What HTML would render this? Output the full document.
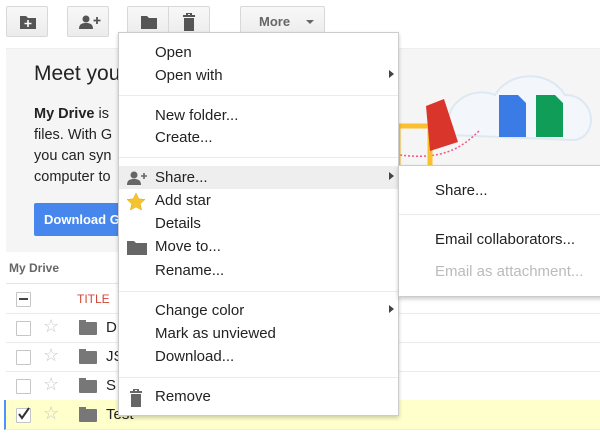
<!DOCTYPE html>
<html><head><style>
body{margin:0;width:600px;height:433px;overflow:hidden;background:#fff;font-family:"Liberation Sans",Arial,sans-serif;position:relative}
.a{position:absolute}
.btn{position:absolute;top:6px;height:31px;border:1px solid #d8d8d8;border-radius:2px;background:linear-gradient(#f8f8f8,#ececec);box-sizing:border-box}
.mi{position:absolute;left:36px;font-size:15px;color:#222;white-space:nowrap}
.sep{position:absolute;left:0;right:0;height:1px;background:#ebebeb}
.row{position:absolute;left:6px;width:594px;height:29px;border-bottom:1px solid #ebebeb}
.cb{position:absolute;left:10px;top:8px;width:13px;height:13px;border:1px solid #c6c6c6;background:#fff;border-radius:1px}
.star{position:absolute;left:37px;top:3px;font-size:18px;color:#c8c8c8}
.fold{position:absolute;left:73px;top:9px;width:18px;height:13px;background:#777;border-radius:1px}
.fold:before{content:"";position:absolute;left:0;top:-2px;width:7px;height:3px;background:#777}
.nm{position:absolute;left:100px;top:6px;font-size:15px;color:#222}
</style></head><body>
<div class="btn" style="left:6px;width:42px"><svg class="a" style="left:13px;top:8px" width="16" height="14"><path d="M0 1h6l2 2h8v11H0z" fill="#555"/><path d="M8 5v7M4.5 8.5h7" stroke="#fff" stroke-width="1.6"/></svg></div>
<div class="btn" style="left:67px;width:42px"><svg class="a" style="left:11px;top:8px" width="22" height="14"><circle cx="7" cy="4" r="3.5" fill="#555"/><path d="M0 14c0-5 3-6 7-6s7 1 7 6z" fill="#555"/><path d="M18 2v7M14.5 5.5h7" stroke="#555" stroke-width="1.8"/></svg></div>
<div class="btn" style="left:127px;width:42px;border-radius:2px 0 0 2px"><svg class="a" style="left:13px;top:8px" width="16" height="14"><path d="M0 1h6l2 2h8v11H0z" fill="#555"/></svg></div>
<div class="btn" style="left:168px;width:42px;border-radius:0 2px 2px 0"><svg class="a" style="left:14px;top:6px" width="12" height="18"><path d="M0 3h12M4 2V0h4v2" stroke="#555" stroke-width="2" fill="none"/><path d="M1 5h10v13H1z" fill="#555"/></svg></div>
<div class="btn" style="left:240px;width:85px"><span class="a" style="left:18px;top:7px;font-size:13px;font-weight:bold;color:#666">More</span><span class="a" style="left:65px;top:13px;border:4px solid transparent;border-top:4px solid #666"></span></div>

<div class="a" style="left:6px;top:48px;width:594px;height:203px;background:#f5f5f5;border-top:1px solid #eee"></div>
<div class="a" style="left:34px;top:62px;font-size:21px;color:#222">Meet you</div>
<div class="a" style="left:34px;top:104px;font-size:14.5px;color:#222;line-height:21px">
<b>My Drive</b> is<br>files. With G<br>you can syn<br>computer to</div>
<div class="a" style="left:34px;top:203px;width:90px;height:33px;background:#4787ed;border-radius:2px;color:#fff;font-size:13px;font-weight:bold"><span class="a" style="left:10px;top:9px">Download G</span></div>
<svg class="a" style="left:380px;top:60px" width="220" height="120">
<path d="M70 75c-10-30 20-50 45-40 15-25 55-25 70 0 30 0 35 40 10 45z" fill="#f3f7fb" stroke="#dde8f2" stroke-width="2"/>
<path d="M20 95c40 5 60-5 80-25" stroke="#e58" stroke-width="1.5" stroke-dasharray="2 2" fill="none"/>
<path d="M18 66h32v62H18z" fill="none" stroke="#fbc02d" stroke-width="5"/>
<path d="M46 46l18-7 14 43-28 9z" fill="#d9352b"/>
<path d="M119 35h19l8 8v34h-27z" fill="#3a7be6"/>
<path d="M156 35h19l8 8v34h-27z" fill="#0f9d58"/>
</svg>

<div class="a" style="left:9px;top:261px;font-size:12px;font-weight:bold;color:#666">My Drive</div>
<div class="a" style="left:6px;top:283px;width:594px;height:1px;background:#e5e5e5"></div>
<div class="row" style="top:284px"><div class="cb" style="top:8px"><div class="a" style="left:2px;top:5px;width:9px;height:2px;background:#444"></div></div><span class="a" style="left:71px;top:8px;font-size:12px;color:#d14836">TITLE</span></div>
<div class="row" style="top:313px"><div class="cb"></div><span class="star">☆</span><div class="fold"></div><span class="nm">D</span></div>
<div class="row" style="top:342px"><div class="cb"></div><span class="star">☆</span><div class="fold"></div><span class="nm">JS</span></div>
<div class="row" style="top:371px"><div class="cb"></div><span class="star">☆</span><div class="fold"></div><span class="nm">S</span></div>
<div class="row" style="top:400px;background:#ffffcc;border-left:2px solid #4d90fe;left:4px"><div class="cb"><svg class="a" style="left:0;top:-2px" width="14" height="14"><path d="M2 7l3 4 7-10" stroke="#333" stroke-width="2" fill="none"/></svg></div><span class="star">☆</span><div class="fold"></div><span class="nm">Test</span></div>

<div class="a" style="left:118px;top:32px;width:281px;height:384px;background:#fff;border:1px solid #ccc;box-shadow:0 2px 4px rgba(0,0,0,.2);box-sizing:border-box">
<div class="a" style="left:0;right:0;top:133px;height:23px;background:#eee"></div>
<div class="mi" style="top:11px">Open</div>
<div class="mi" style="top:34px">Open with</div>
<div class="sep" style="top:62px"></div>
<div class="mi" style="top:74px">New folder...</div>
<div class="mi" style="top:96px">Create...</div>
<div class="sep" style="top:124px"></div>
<div class="mi" style="top:136px">Share...</div>
<div class="mi" style="top:159px">Add star</div>
<div class="mi" style="top:182px">Details</div>
<div class="mi" style="top:205px">Move to...</div>
<div class="mi" style="top:229px">Rename...</div>
<div class="sep" style="top:258px"></div>
<div class="mi" style="top:269px">Change color</div>
<div class="mi" style="top:292px">Mark as unviewed</div>
<div class="mi" style="top:315px">Download...</div>
<div class="sep" style="top:344px"></div>
<div class="mi" style="top:355px">Remove</div>
<span class="a" style="left:270px;top:37px;border:4px solid transparent;border-left:5px solid #444"></span>
<span class="a" style="left:270px;top:139px;border:4px solid transparent;border-left:5px solid #444"></span>
<span class="a" style="left:270px;top:272px;border:4px solid transparent;border-left:5px solid #444"></span>
<svg class="a" style="left:8px;top:138px" width="22" height="14"><circle cx="7" cy="4" r="3.5" fill="#666"/><path d="M0 14c0-5 3-6 7-6s7 1 7 6z" fill="#666"/><path d="M17 2v6M14 5h6" stroke="#666" stroke-width="1.6"/></svg>
<svg class="a" style="left:8px;top:160px" width="18" height="18"><path d="M9 0l2.7 5.8 6.3.7-4.7 4.3 1.3 6.2L9 13.9 3.4 17l1.3-6.2L0 6.5l6.3-.7z" fill="#f4c430" stroke="#e0a800" stroke-width=".5"/></svg>
<svg class="a" style="left:8px;top:208px" width="20" height="14"><path d="M0 0h7l2 2h11v12H0z" fill="#666"/></svg>
<svg class="a" style="left:11px;top:356px" width="12" height="18"><path d="M0 3h12M4 2V0h4v2" stroke="#666" stroke-width="2" fill="none"/><path d="M1 5h10v13H1z" fill="#666"/></svg>
</div>

<div class="a" style="left:398px;top:165px;width:210px;height:132px;background:#fff;border:1px solid #ccc;box-shadow:0 2px 4px rgba(0,0,0,.2);box-sizing:border-box">
<div class="mi" style="top:16px">Share...</div>
<div class="sep" style="top:48px"></div>
<div class="mi" style="top:65px">Email collaborators...</div>
<div class="mi" style="top:97px;color:#bbb">Email as attachment...</div>
</div>
</body></html>
